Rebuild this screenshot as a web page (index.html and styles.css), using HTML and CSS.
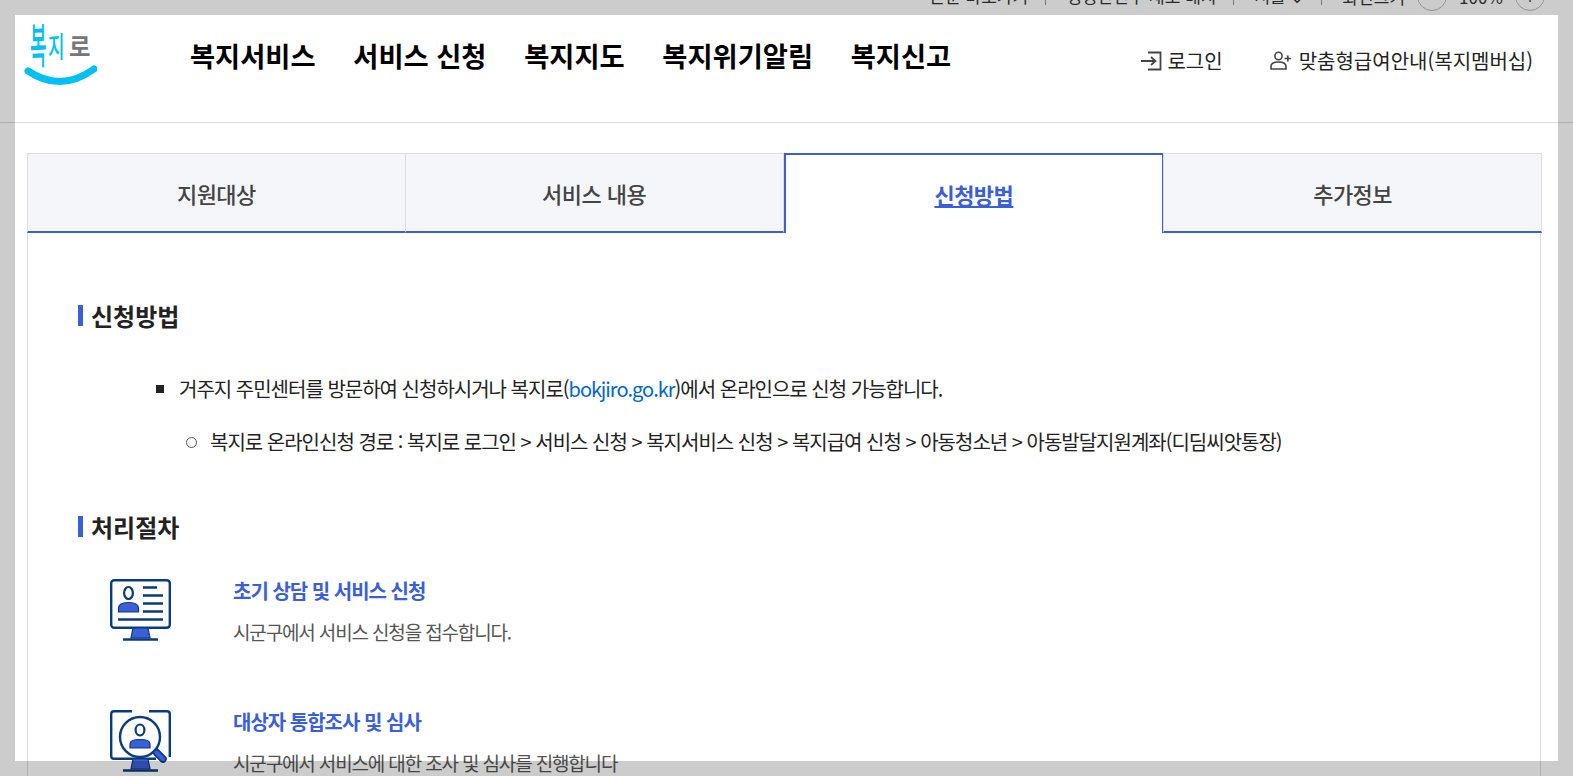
FILE: index.html
```html
<!DOCTYPE html>
<html lang="ko">
<head>
<meta charset="utf-8">
<meta name="viewport" content="width=device-width, initial-scale=1">
<title>복지로 - 신청방법</title>
<link rel="stylesheet" href="styles.css">
</head>
<body>

<!-- top utility bar, page is scrolled so only its lower edge shows -->
<div class="util">
  <a class="util_item">본문 바로가기</a>
  <a class="util_item">행정안전부 새로 배치</a>
  <a class="util_item">서울 ⌄</a>
  <span class="util_size">화면크기</span>
  <span class="util_round"></span>
  <span class="util_zoom">100%</span>
  <span class="util_round util_plus">+</span>
</div>

<header class="head">
  <a class="logo">
    <svg width="80" height="72" viewBox="0 0 80 72">
      <text class="logo_blue" transform="matrix(1 -0.05 0 2.7 13 47)">복</text>
      <text class="logo_blue" transform="matrix(1 -0.1 0 1.65 31 42)">지</text>
      <text class="logo_gray" transform="matrix(1.3 0 0 1.4 52 39)">로</text>
      <path d="M11 54 Q44 76 77 52" fill="none" stroke="#00bff5" stroke-width="7" stroke-linecap="round"/>
    </svg>
  </a>
  <nav class="gnb">
    <a>복지서비스</a>
    <a>서비스 신청</a>
    <a>복지지도</a>
    <a>복지위기알림</a>
    <a>복지신고</a>
  </nav>
  <div class="member">
    <a class="member_link member_login">
      <svg width="21" height="20" viewBox="0 0 21 20">
        <path d="M0 10H14M10 6L14.500 10L10 14" fill="none" stroke="#444" stroke-width="1.800"/>
        <path d="M7 1.500H19.500V18.500H7" fill="none" stroke="#444" stroke-width="1.800"/>
      </svg>
      로그인
    </a>
    <a class="member_link">
      <svg width="22" height="20" viewBox="0 0 22 20">
        <ellipse cx="8.500" cy="5" rx="3.600" ry="3.800" fill="none" stroke="#444" stroke-width="1.600"/>
        <path d="M1 18V15.500C1 12.500 4 11 8.500 11C13 11 16 12.500 16 15.500V18Z" fill="none" stroke="#444" stroke-width="1.600"/>
        <path d="M14.500 7.500H21M17.800 4.500V10.500" fill="none" stroke="#444" stroke-width="1.700"/>
      </svg>
      맞춤형급여안내(복지멤버십)
    </a>
  </div>
</header>

<main class="wrap">
  <ul class="tab">
    <li>지원대상</li>
    <li>서비스 내용</li>
    <li class="active"><a>신청방법</a></li>
    <li>추가정보</li>
  </ul>

  <section class="tabcontent">
    <h3 class="title">신청방법</h3>
    <ul class="list1">
      <li>거주지 주민센터를 방문하여 신청하시거나 복지로(<a>bokjiro.go.kr</a>)에서 온라인으로 신청 가능합니다.
        <ul class="list2">
          <li>복지로 온라인신청 경로 : 복지로 로그인 &gt; 서비스 신청 &gt; 복지서비스 신청 &gt; 복지급여 신청 &gt; 아동청소년 &gt; 아동발달지원계좌(디딤씨앗통장)</li>
        </ul>
      </li>
    </ul>

    <h3 class="title title_step">처리절차</h3>
    <div class="step">
      <svg class="step_icon" width="61" height="62" viewBox="0 0 61 62">
        <rect x="1.200" y="1.200" width="58.600" height="47.600" rx="3" fill="#fff" stroke="#0b3a7e" stroke-width="2.400"/>
        <path d="M23 49H38L40 59H21Z" fill="#3b5fd9" stroke="#0b3a7e" stroke-width="1.200"/>
        <path d="M13 60.500H48" stroke="#0b3a7e" stroke-width="2.600"/>
        <ellipse cx="18.500" cy="14" rx="4.400" ry="6" fill="#fff" stroke="#0b3a7e" stroke-width="2.200"/>
        <path d="M8.500 33V29C8.500 25.500 12 23.500 18.500 23.500C25 23.500 28.500 25.500 28.500 29V33Z" fill="#3b5fd9" stroke="#0b3a7e" stroke-width="1.200"/>
        <path d="M33 8.500H47M33 16.500H53M33 24.500H53M33 32.500H53M8 40.500H53" stroke="#0b3a7e" stroke-width="2.400"/>
      </svg>
      <div>
        <strong class="step_title">초기 상담 및 서비스 신청</strong>
        <p class="step_text">시군구에서 서비스 신청을 접수합니다.</p>
      </div>
    </div>
    <div class="step">
      <svg class="step_icon" width="61" height="62" viewBox="0 0 61 62">
        <path d="M22 1.200H4C2 1.200 1.200 2 1.200 4V46C1.200 48 2 48.800 4 48.800H46M39 1.200H57C59 1.200 59.800 2 59.800 4V47" fill="none" stroke="#0b3a7e" stroke-width="2.400"/>
        <path d="M23 49H38L40 59H21Z" fill="#3b5fd9" stroke="#0b3a7e" stroke-width="1.200"/>
        <path d="M13 60.500H48" stroke="#0b3a7e" stroke-width="2.600"/>
        <circle cx="30" cy="27" r="20" fill="#fff" stroke="#0b3a7e" stroke-width="2.400"/>
        <ellipse cx="30" cy="20" rx="4.400" ry="5.500" fill="#fff" stroke="#0b3a7e" stroke-width="2.200"/>
        <path d="M20 38V34C20 31 24 29.500 30 29.500C36 29.500 40 31 40 34V38Z" fill="#3b5fd9" stroke="#0b3a7e" stroke-width="1.200"/>
        <path d="M46.500 42.500L53 49" stroke="#0b3a7e" stroke-width="7.500" stroke-linecap="round"/>
        <path d="M46.500 42.500L53 49" stroke="#3b5fd9" stroke-width="4" stroke-linecap="round"/>
      </svg>
      <div>
        <strong class="step_title">대상자 통합조사 및 심사</strong>
        <p class="step_text">시군구에서 서비스에 대한 조사 및 심사를 진행합니다</p>
      </div>
    </div>
  </section>
</main>

<!-- focus highlight laid over the page -->
<div class="focus_box"></div>

</body>
</html>
```

FILE: styles.css
```css
* {box-sizing: border-box}

html, body {
  height: 776px;
  overflow: hidden;
}

body {
  margin: 0;
  background-color: #fff;
  color: #222;
  font-family: "Noto Sans CJK KR", "Noto Sans", sans-serif;
}

a {
  color: inherit;
}

ul {
  margin: 0;
  padding: 0;
  list-style: none;
}

/* Utility bar */
.util {
  display: flex;
  align-items: center;
  justify-content: flex-end;
  height: 30px;
  margin-top: -19px;
  padding-right: 28px;
  font-size: 17px;
  color: #333;
}

.util_item {
  padding-right: 17px;
  margin-right: 20px;
  border-right: 1px solid #999;
  line-height: 18px;
}

.util_size {
  margin-right: 12px;
}

.util_round {
  display: block;
  width: 30px;
  height: 30px;
  border: 1px solid #bbb;
  border-radius: 50%;
  text-align: center;
  line-height: 30px;
}

.util_zoom {
  margin: 0 12px;
}

/* Header */
.head {
  display: flex;
  height: 112px;
  padding: 6px 40px 0 17px;
  border-bottom: 1px solid #ddd;
}

.logo {
  display: block;
  width: 173px;
}

.gnb {
  display: flex;
  align-items: flex-start;
  gap: 37.7px;
  padding-top: 18px;
  font-size: 27.3px;
  font-weight: 700;
  line-height: 40px;
  color: #000;
}

.member {
  display: flex;
  align-items: flex-start;
  gap: 47px;
  margin-left: auto;
  padding-top: 26px;
  font-size: 20px;
  line-height: 36px;
  color: #222;
}

.member_link {
  display: flex;
  align-items: center;
  gap: 7px;
}

.member_login {
  gap: 5px;
}

/* Tabs and content box */
.wrap {
  margin: 30px 32px 0 27px;
  border: 1px solid #ddd;
  border-top: none;
}

.tab {
  display: flex;
  height: 80px;
  margin: 0 -1px;
}

.tab li {
  flex: 1;
  display: flex;
  align-items: center;
  justify-content: center;
  margin-right: -1px;
  border: 1px solid #ddd;
  border-bottom: 2px solid #3b5fd9;
  background-color: #f4f6fa;
  font-size: 22px;
  font-weight: 500;
  letter-spacing: -0.5px;
  color: #444;
}

.tab li.active {
  margin-left: 1px;
  border: 2px solid #3b5fd9;
  border-bottom: none;
  background-color: #fff;
  color: #3b5fd9;
  font-weight: 700;
}

.tab li.active a {
  text-decoration: underline;
}

.tabcontent {
  padding: 71px 50px 0 50px;
}

.title {
  margin: 0;
  padding-left: 13px;
  font-size: 24px;
  font-weight: 700;
  line-height: 24px;
  color: #222;
  position: relative;
}

.title::before {
  content: "";
  position: absolute;
  left: 0;
  top: 1px;
  width: 5px;
  height: 21px;
  background-color: #3b5fd9;
}

.title_step {
  margin-top: 58px;
}

.list1 {
  margin-top: 46px;
  padding-left: 101px;
  font-size: 20px;
  line-height: 30px;
  letter-spacing: -1px;
}

.list1 > li,
.list2 > li {
  position: relative;
}

.list1 > li::before {
  content: "";
  position: absolute;
  left: -23px;
  top: 11px;
  width: 8px;
  height: 8px;
  background-color: #222;
}

.list1 a {
  color: #0067c5;
}

.list2 {
  margin-top: 23px;
  padding-left: 31px;
}

.list2 > li::before {
  content: "";
  position: absolute;
  left: -24px;
  top: 10px;
  width: 9px;
  height: 9px;
  border: 1px solid #555;
  border-radius: 50%;
}

.step {
  display: flex;
  gap: 62px;
  height: 131px;
  padding-left: 32px;
}

.title_step + .step {
  margin-top: 39px;
}

.step_icon {
  flex: none;
  margin-top: 1px;
}

.step_title {
  display: block;
  font-size: 20px;
  font-weight: 700;
  line-height: 26px;
  letter-spacing: -1px;
  color: #3b5fd9;
}

.step_text {
  margin: 15px 0 0 0;
  font-size: 19px;
  line-height: 26px;
  letter-spacing: -1.15px;
  color: #555;
}

/* Logo lettering */
.logo_blue {
  font-size: 18px;
  font-weight: 500;
  fill: #00bff5;
}

.logo_gray {
  font-size: 18px;
  font-weight: 700;
  fill: #777;
}

/* Focus highlight */
.focus_box {
  position: fixed;
  left: 15px;
  top: 15px;
  width: 1543px;
  height: 746px;
  box-shadow: 0 0 0 2000px rgba(0, 0, 0, 0.2);
  pointer-events: none;
}
```
